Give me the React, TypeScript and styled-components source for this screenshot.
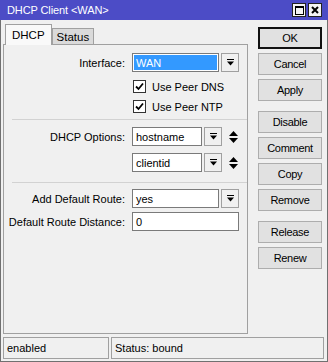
import React from "react";
import styled, { createGlobalStyle } from "styled-components";

const GlobalStyle = createGlobalStyle`
  html, body {
    margin: 0;
    padding: 0;
    background: #f0f0f0;
  }
  body {
    font-family: "Liberation Sans", Arial, sans-serif;
    font-size: 11px;
    color: #000;
  }
`;

const Window = styled.div`
  width: 328px;
  height: 362px;
  display: flex;
  flex-direction: column;
  background: #f0f0f0;
`;

const TitleBar = styled.div`
  height: 20px;
  flex: none;
  display: flex;
  align-items: center;
  padding: 0 6px 0 7px;
  background: #4c4cc6;
  color: #fff;
  font-size: 11px;
  letter-spacing: -0.1px;
`;

const Title = styled.span`
  flex: 1;
`;

const TitleButton = styled.div`
  width: 14px;
  height: 14px;
  box-sizing: border-box;
  margin-left: 2px;
  border: 1px solid #222;
  background: #f4f4f4;
  display: flex;
  align-items: center;
  justify-content: center;
`;

const Frame = styled.div`
  flex: 1;
  display: flex;
  flex-direction: column;
  border: 1px solid #707070;
  border-top: none;
  padding-bottom: 2px;
`;

const Body = styled.div`
  flex: 1;
  display: flex;
`;

const LeftColumn = styled.div`
  width: 245px;
  margin-left: 2px;
  padding-top: 4px;
  display: flex;
  flex-direction: column;
`;

const TabRow = styled.div`
  height: 20px;
  display: flex;
  align-items: flex-end;
  padding-left: 2px;
`;

const Tab = styled.div<{ $active?: boolean }>`
  box-sizing: border-box;
  height: ${({ $active }) => ($active ? "21px" : "16px")};
  margin-bottom: ${({ $active }) => ($active ? "-1px" : "0")};
  padding: 0 ${({ $active }) => ($active ? "6px" : "4px")};
  border: 1px solid #a0a0a0;
  border-bottom: none;
  background: ${({ $active }) => ($active ? "#f9f9f9" : "#dadada")};
  position: relative;
  z-index: ${({ $active }) => ($active ? 1 : 0)};
  display: flex;
  align-items: center;
  font-size: 11.5px;
`;

const Panel = styled.div`
  flex: 1;
  border: 1px solid #a0a0a0;
  display: flex;
  flex-direction: column;
`;

const Row = styled.div<{ $top: number }>`
  display: grid;
  grid-template-columns: 121px auto;
  column-gap: 7px;
  align-items: center;
  height: 19px;
  margin-top: ${({ $top }) => $top}px;
`;

const Label = styled.span`
  text-align: right;
  white-space: nowrap;
`;

const Controls = styled.div`
  display: flex;
  align-items: center;
  gap: 2px;
`;

const Input = styled.div<{ $width: number }>`
  box-sizing: border-box;
  width: ${({ $width }) => $width}px;
  height: 19px;
  border: 1px solid #7a7a7a;
  background: #fff;
  padding: 1px;
  display: flex;
`;

const InputText = styled.span<{ $selected?: boolean }>`
  flex: 1;
  display: flex;
  align-items: center;
  padding-left: 2px;
  background: ${({ $selected }) => ($selected ? "#3399ff" : "transparent")};
  color: ${({ $selected }) => ($selected ? "#fff" : "#000")};
`;

const DropButton = styled.div`
  box-sizing: border-box;
  width: 18px;
  height: 19px;
  border: 1px solid #a0a0a0;
  background: #f0f0f0;
  display: flex;
  align-items: center;
  justify-content: center;
`;

const Spinner = styled.div`
  margin-left: 5px;
  display: flex;
  align-items: center;
`;

const CheckRow = styled.div<{ $top: number }>`
  display: flex;
  align-items: center;
  height: 19px;
  margin-top: ${({ $top }) => $top}px;
  margin-left: 129px;
  gap: 6px;
`;

const CheckBox = styled.div`
  box-sizing: border-box;
  width: 13px;
  height: 13px;
  border: 1px solid #333;
  background: #fff;
  display: flex;
  align-items: center;
  justify-content: center;
`;

const Separator = styled.div<{ $top: number }>`
  height: 1px;
  margin: ${({ $top }) => $top}px 0 0 8px;
  background: #d2d2d2;
`;

const ButtonColumn = styled.div`
  width: 64px;
  margin-left: 10px;
  padding-top: 7px;
  display: flex;
  flex-direction: column;
`;

const ButtonGroup = styled.div<{ $top: number }>`
  display: flex;
  flex-direction: column;
  gap: 4px;
  margin-top: ${({ $top }) => $top}px;
`;

const Button = styled.div<{ $default?: boolean }>`
  box-sizing: border-box;
  height: 22px;
  border: ${({ $default }) => ($default ? "2px solid #111" : "1px solid #adadad")};
  background: #e1e1e1;
  display: flex;
  align-items: center;
  justify-content: center;
  letter-spacing: -0.3px;
`;

const StatusBar = styled.div`
  height: 22px;
  margin: 3px 3px 0 2px;
  display: flex;
  gap: 2px;
`;

const StatusCell = styled.div<{ $width?: number }>`
  box-sizing: border-box;
  ${({ $width }) => ($width ? `width: ${$width}px;` : "flex: 1;")}
  border: 1px solid #a0a0a0;
  display: flex;
  align-items: center;
  padding-left: 3px;
`;

const DropIcon = () => (
  <svg width="7" height="7" viewBox="0 0 7 7">
    <rect x="0" y="0" width="7" height="1" fill="#000" />
    <polygon points="0,2.5 7,2.5 3.5,6.5" fill="#000" />
  </svg>
);

const SpinIcon = () => (
  <svg width="9" height="12" viewBox="0 0 9 12">
    <polygon points="4.5,0 9,5 0,5" fill="#000" />
    <polygon points="0,7 9,7 4.5,12" fill="#000" />
  </svg>
);

const CheckMark = () => (
  <svg width="9" height="9" viewBox="0 0 9 9">
    <path d="M1 4.5 L3.5 7 L8 1.5" stroke="#000" strokeWidth="1.8" fill="none" />
  </svg>
);

const Select = ({ value, width, selected }: { value: string; width: number; selected?: boolean }) => (
  <>
    <Input $width={width}>
      <InputText $selected={selected}>{value}</InputText>
    </Input>
    <DropButton>
      <DropIcon />
    </DropButton>
  </>
);

const Check = ({ label, top }: { label: string; top: number }) => (
  <CheckRow $top={top}>
    <CheckBox>
      <CheckMark />
    </CheckBox>
    <span>{label}</span>
  </CheckRow>
);

export default function App() {
  return (
    <>
      <GlobalStyle />
      <Window>
        <TitleBar>
          <Title>DHCP Client &lt;WAN&gt;</Title>
          <TitleButton>
            <svg width="9" height="9" viewBox="0 0 9 9">
              <rect x="0.5" y="0.5" width="8" height="8" fill="none" stroke="#000" />
              <rect x="0" y="0" width="9" height="2" fill="#000" />
            </svg>
          </TitleButton>
          <TitleButton>
            <svg width="8" height="8" viewBox="0 0 8 8">
              <path d="M1 1 L7 7 M7 1 L1 7" stroke="#000" strokeWidth="2" />
            </svg>
          </TitleButton>
        </TitleBar>
        <Frame>
          <Body>
            <LeftColumn>
              <TabRow>
                <Tab $active>DHCP</Tab>
                <Tab>Status</Tab>
              </TabRow>
              <Panel>
                <Row $top={8}>
                  <Label>Interface:</Label>
                  <Controls>
                    <Select value="WAN" width={87} selected />
                  </Controls>
                </Row>
                <Check label="Use Peer DNS" top={5} />
                <Check label="Use Peer NTP" top={1} />
                <Separator $top={3} />
                <Row $top={7}>
                  <Label>DHCP Options:</Label>
                  <Controls>
                    <Select value="hostname" width={70} />
                    <Spinner>
                      <SpinIcon />
                    </Spinner>
                  </Controls>
                </Row>
                <Row $top={7}>
                  <span />
                  <Controls>
                    <Select value="clientid" width={70} />
                    <Spinner>
                      <SpinIcon />
                    </Spinner>
                  </Controls>
                </Row>
                <Separator $top={10} />
                <Row $top={6}>
                  <Label>Add Default Route:</Label>
                  <Controls>
                    <Select value="yes" width={87} />
                  </Controls>
                </Row>
                <Row $top={4}>
                  <Label>Default Route Distance:</Label>
                  <Controls>
                    <Input $width={107}>
                      <InputText>0</InputText>
                    </Input>
                  </Controls>
                </Row>
              </Panel>
            </LeftColumn>
            <ButtonColumn>
              <ButtonGroup $top={0}>
                <Button $default>OK</Button>
                <Button>Cancel</Button>
                <Button>Apply</Button>
              </ButtonGroup>
              <ButtonGroup $top={10}>
                <Button>Disable</Button>
                <Button>Comment</Button>
                <Button>Copy</Button>
                <Button>Remove</Button>
              </ButtonGroup>
              <ButtonGroup $top={10}>
                <Button>Release</Button>
                <Button>Renew</Button>
              </ButtonGroup>
            </ButtonColumn>
          </Body>
          <StatusBar>
            <StatusCell $width={106}>enabled</StatusCell>
            <StatusCell>Status: bound</StatusCell>
          </StatusBar>
        </Frame>
      </Window>
    </>
  );
}
